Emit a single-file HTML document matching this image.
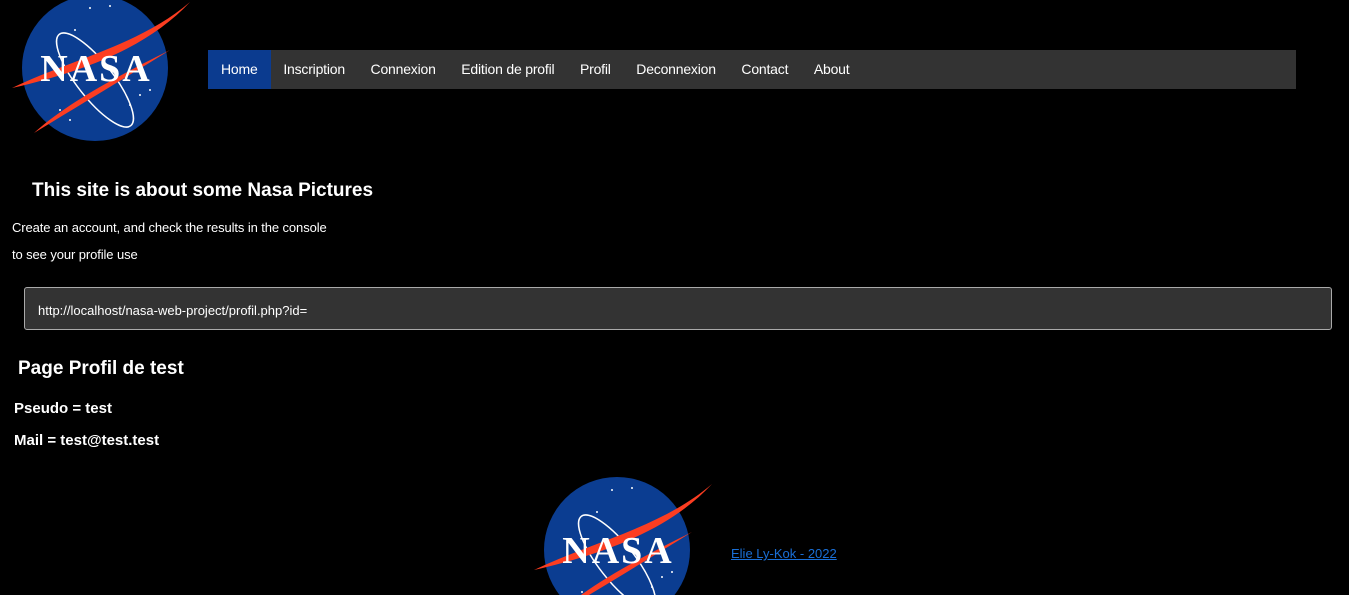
<!DOCTYPE html>
<html style="overflow:hidden;height:595px"><head><meta charset="utf-8"><style>
body{margin:0;background:#000;width:1349px;height:595px;overflow:hidden;position:relative;font-family:"Liberation Sans",sans-serif;color:#fff}
.a{position:absolute}
svg{overflow:visible}
nav{position:absolute;left:208px;top:50px;width:1088px;height:39px;background:#333;display:flex}
nav span{padding:0 12.8px;line-height:39px;font-size:14px;color:#fff;letter-spacing:-0.2px}
nav span.h{background:#0b3b8f;padding:0 13px}
</style></head><body>
<svg class="a" style="left:0;top:0" width="200" height="145" viewBox="0 0 200 145">
<g id="logo">
<circle cx="95" cy="68" r="73" fill="#0b3d91"/>
<ellipse cx="95" cy="80" rx="18" ry="58" transform="rotate(-38 95 80)" fill="none" stroke="#fff" stroke-width="1.5"/>
<path d="M12 88 C70 60 140 45 190 2 C150 45 90 70 12 88Z" fill="#fc3d21"/>
<path d="M34 133 C70 100 130 70 170 50 C130 75 80 105 34 133Z" fill="#fc3d21"/>
<text x="96" y="81" text-anchor="middle" font-family="Liberation Serif,serif" font-weight="bold" font-size="38" fill="#fff" letter-spacing="2">NASA</text>
<g fill="#fff"><circle cx="90" cy="8" r="1"/><circle cx="110" cy="6" r="1"/><circle cx="75" cy="30" r="1"/><circle cx="140" cy="95" r="1"/><circle cx="130" cy="105" r="1"/><circle cx="60" cy="110" r="1"/><circle cx="150" cy="90" r="1"/><circle cx="70" cy="120" r="1"/></g>
</g></svg>
<nav><span class="h">Home</span><span>Inscription</span><span>Connexion</span><span>Edition de profil</span><span>Profil</span><span>Deconnexion</span><span>Contact</span><span>About</span></nav>
<div class="a" style="left:32px;top:180px;font-size:19px;font-weight:bold">This site is about some Nasa Pictures</div>
<div class="a" style="left:12px;top:220px;font-size:13px;letter-spacing:-0.1px">Create an account, and check the results in the console</div>
<div class="a" style="left:12px;top:247px;font-size:13px;letter-spacing:-0.1px">to see your profile use</div>
<div class="a" style="left:24px;top:287px;width:1308px;height:43px;background:#333;border:1px solid #aaa;border-radius:3px;box-sizing:border-box"><span style="position:absolute;left:13px;top:15px;font-size:13px">http://localhost/nasa-web-project/profil.php?id=</span></div>
<div class="a" style="left:18px;top:358px;font-size:19px;font-weight:bold">Page Profil de test</div>
<div class="a" style="left:14px;top:400px;font-size:15px;font-weight:bold">Pseudo = test</div>
<div class="a" style="left:14px;top:432px;font-size:15px;font-weight:bold">Mail = test@test.test</div>
<div class="a" style="left:522px;top:470px;width:200px;height:125px;overflow:hidden"><svg style="position:absolute;left:0;top:12px" width="200" height="145" viewBox="0 0 200 145"><use href="#logo"/></svg></div>
<a class="a" style="left:731px;top:546px;font-size:13px;color:#1a6fd6;text-decoration:underline">Elie Ly-Kok - 2022</a>
</body></html>
